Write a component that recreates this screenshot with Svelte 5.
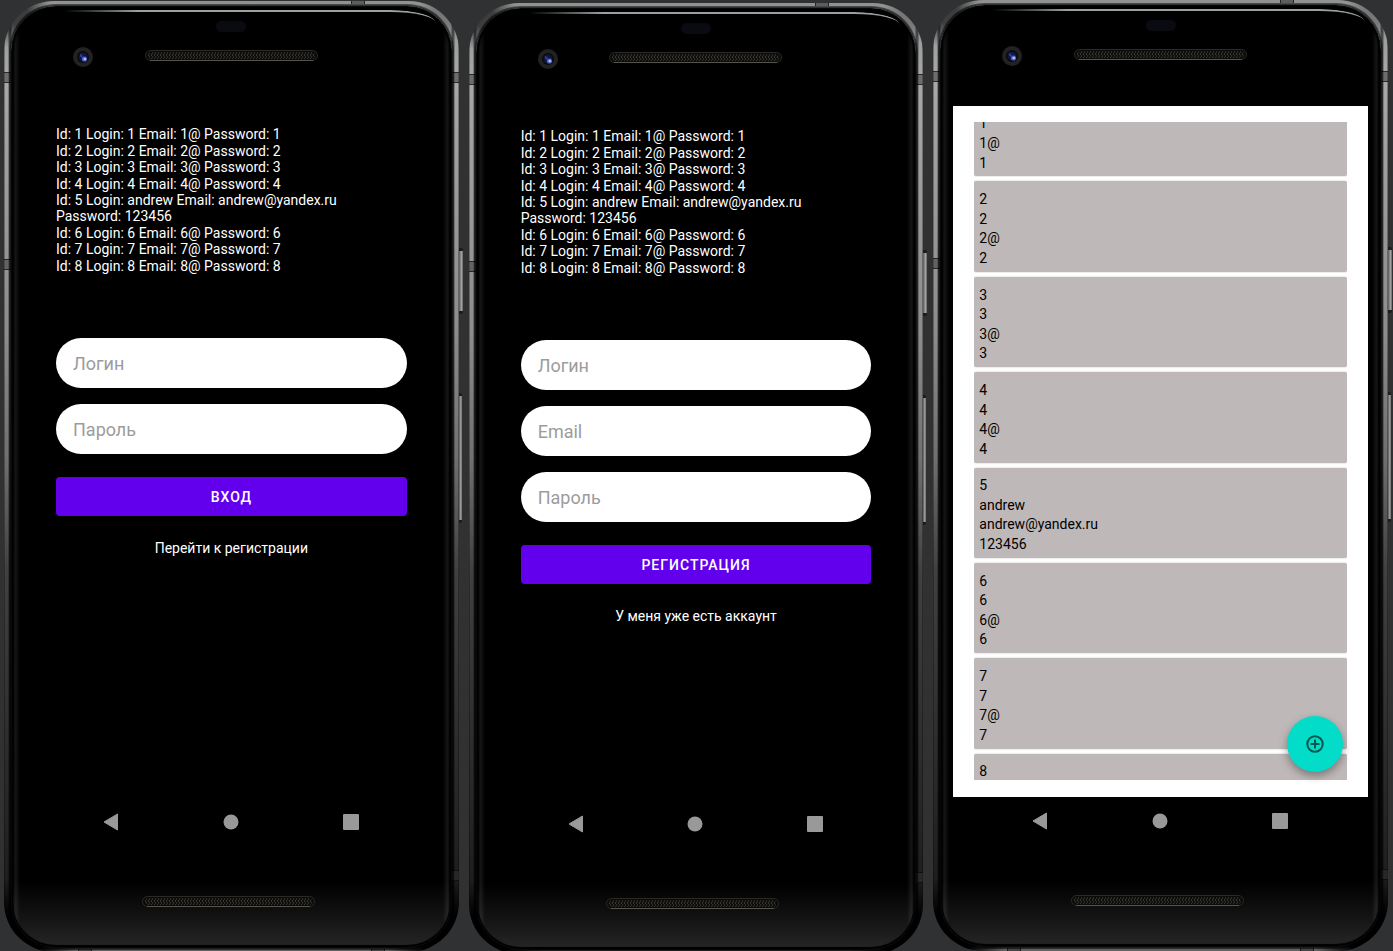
<script>
  import { onMount } from 'svelte';

  const users = [
    { id: 1, login: '1', email: '1@', password: '1' },
    { id: 2, login: '2', email: '2@', password: '2' },
    { id: 3, login: '3', email: '3@', password: '3' },
    { id: 4, login: '4', email: '4@', password: '4' },
    { id: 5, login: 'andrew', email: 'andrew@yandex.ru', password: '123456' },
    { id: 6, login: '6', email: '6@', password: '6' },
    { id: 7, login: '7', email: '7@', password: '7' },
    { id: 8, login: '8', email: '8@', password: '8' }
  ];

  let list;

  onMount(() => {
    list.scrollTop = 36;
  });
</script>

{#snippet speaker()}
  <svg class="speaker" width="173" height="11" viewBox="0 0 173 11" aria-hidden="true">
    <defs>
      <pattern id="mesh" width="3" height="4" patternUnits="userSpaceOnUse">
        <rect width="3" height="4" fill="#0f0f0d" />
        <rect width="1" height="2" fill="#3a3730" />
        <rect x="1" y="2" width="1" height="2" fill="#2f2d27" />
      </pattern>
    </defs>
    <rect x="0.5" y="0.5" width="172" height="10" rx="5" fill="#0b0b0a" stroke="#2b2a27" />
    <rect x="3" y="2" width="167" height="7" rx="3.5" fill="url(#mesh)" />
    <path d="M5 10.5H168" stroke="#55544e" />
  </svg>
{/snippet}

{#snippet log()}
  <div class="log">
    {#each users as u}
      <div>Id: {u.id} Login: {u.login} Email: {u.email} Password: {u.password}</div>
    {/each}
  </div>
{/snippet}

{#snippet phone(content)}
  <section class="phone">
    <span class="key power"></span>
    <span class="key volume"></span>
    <span class="seam left upper"></span>
    <span class="seam left middle"></span>
    <span class="seam right upper"></span>
    <span class="seam right lower"></span>
    <span class="notch top-right"></span>
    <span class="notch bottom-left"></span>
    <span class="notch bottom-right"></span>
    <div class="glass">
      <span class="shine"></span>
      <div class="head">
        <svg class="camera" width="20" height="20" viewBox="0 0 20 20" aria-hidden="true">
          <circle cx="10" cy="10" r="10" fill="#232222" />
          <circle cx="10" cy="10" r="6" fill="#090a10" />
          <circle cx="10" cy="10" r="4.5" fill="#10163c" />
          <path d="M7 6.5l3 2.5-1 2-2-1.5z" fill="#2b3c92" />
          <circle cx="11.5" cy="12" r="2.6" fill="#4c62c8" />
          <circle cx="11.8" cy="12" r="1.3" fill="#b5c3ff" />
        </svg>
        <div class="middle-top">
          <span class="sensor"></span>
          {@render speaker()}
        </div>
      </div>
      <div class="screen">{@render content()}</div>
      <div class="nav">
        <button aria-label="Back">
          <svg width="16" height="18" viewBox="0 0 16 18"><path d="M14.5 1v16L1 9z" fill="#999" stroke="#999" stroke-linejoin="round" /></svg>
        </button>
        <button aria-label="Home">
          <svg width="16" height="16" viewBox="0 0 16 16"><circle cx="8" cy="8" r="7.5" fill="#999" /></svg>
        </button>
        <button aria-label="Recent apps">
          <svg width="16" height="16" viewBox="0 0 16 16"><rect width="16" height="16" rx="1" fill="#999" /></svg>
        </button>
      </div>
      <div class="foot">{@render speaker()}</div>
    </div>
  </section>
{/snippet}

{#snippet login()}
  <form class="auth">
    {@render log()}
    <input type="text" placeholder="Логин" aria-label="Логин" />
    <input type="password" placeholder="Пароль" aria-label="Пароль" />
    <button type="button" class="submit">ВХОД</button>
    <a href="#register">Перейти к регистрации</a>
  </form>
{/snippet}

{#snippet register()}
  <form class="auth">
    {@render log()}
    <input type="text" placeholder="Логин" aria-label="Логин" />
    <input type="email" placeholder="Email" aria-label="Email" />
    <input type="password" placeholder="Пароль" aria-label="Пароль" />
    <button type="button" class="submit">РЕГИСТРАЦИЯ</button>
    <a href="#login">У меня уже есть аккаунт</a>
  </form>
{/snippet}

{#snippet records()}
  <div class="records">
    <div class="viewport" bind:this={list}>
      <ul>
        {#each users as u}
          <li>
            <span>{u.id}</span>
            <span>{u.login}</span>
            <span>{u.email}</span>
            <span>{u.password}</span>
          </li>
        {/each}
      </ul>
    </div>
    <button class="fab" aria-label="Add">
      <svg width="18" height="18" viewBox="0 0 18 18" fill="none" stroke="#03584f" stroke-width="2">
        <circle cx="9" cy="9" r="7.7" />
        <path d="M9 4.5v9M4.5 9h9" />
      </svg>
    </button>
  </div>
{/snippet}

<main>
  {@render phone(login)}
  {@render phone(register)}
  {@render phone(records)}
</main>

<style>
  :global(body) {
    margin: 0;
    background: #2f3133;
  }

  main {
    display: grid;
    grid-template-columns: repeat(3, 1fr);
    gap: 10px;
    box-sizing: border-box;
    min-height: 100vh;
    max-height: 951px;
    padding: 0 5px 0 4px;
    overflow: hidden;
    background: #2f3133;
    font: 14px/16px Roboto, sans-serif;
    color: #fff;
  }

  .phone {
    position: relative;
    box-sizing: border-box;
    height: 951px;
    padding: 5px 7px 4px;
    border-radius: 50px;
    background:
      radial-gradient(circle at 14px 14px, rgba(0, 0, 0, 0.6) 10px, transparent 34px),
      radial-gradient(circle at calc(100% - 14px) 14px, rgba(0, 0, 0, 0.2) 10px, transparent 28px),
      radial-gradient(circle at 14px calc(100% - 14px), #000 24px, transparent 60px),
      radial-gradient(circle at calc(100% - 14px) calc(100% - 14px), #000 24px, transparent 60px),
      linear-gradient(90deg, rgba(0, 0, 0, 0.3) 0 1px, transparent 1px 4px, rgba(0, 0, 0, 0.5) 5px 7px, transparent 8px calc(100% - 8px), rgba(0, 0, 0, 0.5) calc(100% - 7px) calc(100% - 5px), transparent calc(100% - 4px) calc(100% - 1px), rgba(0, 0, 0, 0.3) calc(100% - 1px)),
      linear-gradient(#909292, #a8a8a8 8%, #8c8c8c 35%, #707070 48%, #404040 60%, #262626 85%, #181818 98%, #666 100%);
  }

  .phone:nth-child(1) {
    top: 1px;
  }

  .phone:nth-child(2) {
    top: 3px;
  }

  .key {
    position: absolute;
    left: 100%;
    box-sizing: border-box;
    border: solid #1c1c1c;
    border-width: 3px 0;
    border-radius: 0 2px 2px 0;
    background: linear-gradient(90deg, #555, #a3a3a3 60%, #666);
  }

  .power {
    top: 247px;
    width: 4px;
    height: 66px;
  }

  .volume {
    top: 392px;
    width: 3px;
    height: 130px;
  }

  .seam {
    position: absolute;
    box-sizing: border-box;
    width: 7px;
    height: 11px;
    border: solid rgba(0, 0, 0, 0.6);
    border-width: 1px 0;
    background: rgba(50, 50, 50, 0.5);
  }

  .left {
    left: 0;
  }

  .right {
    right: 0;
  }

  .upper {
    top: 71px;
  }

  .middle {
    top: 258px;
  }

  .lower {
    top: 869px;
  }

  .notch {
    position: absolute;
    box-sizing: border-box;
    width: 14px;
    height: 3px;
    border: solid rgba(0, 0, 0, 0.6);
    border-width: 0 1px;
    background: rgba(40, 40, 40, 0.5);
  }

  .top-right {
    top: 0;
    right: 94px;
  }

  .bottom-left {
    bottom: 0;
    left: 74px;
  }

  .bottom-right {
    bottom: 0;
    right: 74px;
  }

  .glass {
    position: relative;
    display: flex;
    flex-direction: column;
    box-sizing: border-box;
    height: 100%;
    padding: 0 12px;
    border: 1px solid #080808;
    border-radius: 45px;
    background:
      linear-gradient(90deg, transparent 1px, rgba(255, 255, 255, 0.08) 3px 4px, transparent 8px calc(100% - 8px), rgba(255, 255, 255, 0.08) calc(100% - 4px) calc(100% - 3px), transparent calc(100% - 1px)),
      linear-gradient(#000 93%, #0f0f0f 96%, #262626 100%);
    box-shadow:
      0 0 0 1px rgba(0, 0, 0, 0.35),
      0 0 0 2px rgba(0, 0, 0, 0.5),
      inset 0 0 0 1px #000,
      inset 0 4px 3px #000,
      inset 0 -2px 1px #000;
  }

  .shine {
    position: absolute;
    top: 3px;
    left: 52px;
    right: 15px;
    box-sizing: border-box;
    height: 13px;
    border-top: 2px solid #98a2a3;
    border-radius: 0 46px 0 0 / 0 13px 0 0;
    -webkit-mask: linear-gradient(90deg, transparent, #000 20%);
    mask: linear-gradient(90deg, transparent, #000 20%);
  }

  .head {
    display: grid;
    grid-template-columns: 1fr auto 1fr;
    height: 100px;
    flex: none;
  }

  .camera {
    margin: 40px 0 0 49px;
  }

  .middle-top {
    display: flex;
    flex-direction: column;
    align-items: center;
    gap: 18px;
    padding-top: 14px;
  }

  .sensor {
    width: 30px;
    height: 11px;
    border-radius: 6px;
    background: #0a0b10;
  }

  .screen {
    height: 691px;
    flex: none;
  }

  .nav {
    display: grid;
    grid-template-columns: repeat(3, 1fr);
    height: 48px;
    flex: none;
    padding: 0 28px 0 27px;
  }

  .nav button {
    display: flex;
    align-items: center;
    justify-content: center;
    padding: 0;
    border: 0;
    background: none;
  }

  .foot {
    display: flex;
    justify-content: center;
    padding: 50px 6px 0 0;
  }

  .auth {
    display: flex;
    flex-direction: column;
    padding: 19px 32px 0;
  }

  .log {
    display: flex;
    flex-direction: column;
    justify-content: space-between;
    height: 148px;
    margin-bottom: 64px;
    padding-right: 16px;
  }

  .auth input {
    box-sizing: border-box;
    width: 100%;
    height: 50px;
    margin-bottom: 16px;
    padding: 1px 17px 0;
    border: 0;
    border-radius: 25px;
    outline: 0;
    background: #fff;
    color: #222;
    font: 18px/24px Roboto, sans-serif;
  }

  .auth input::placeholder {
    color: #9c9c9c;
    opacity: 1;
  }

  .submit {
    height: 39px;
    margin: 7px 0 24px;
    padding: 0;
    border: 0;
    border-radius: 4px;
    background: #6200ee;
    color: #fff;
    font: 500 14px/16px Roboto, sans-serif;
    letter-spacing: 1px;
  }

  .auth a {
    align-self: center;
    color: #fff;
    text-decoration: none;
  }

  .records {
    position: relative;
    box-sizing: border-box;
    height: 100%;
    padding: 16px 21px 17px;
    background: #fff;
    color: #000;
  }

  .viewport {
    height: 100%;
    overflow-y: auto;
    scrollbar-width: none;
  }

  ul {
    display: grid;
    grid-template-rows: repeat(8, 1fr);
    gap: 5px;
    height: 758px;
    margin: 0;
    padding: 0;
    list-style: none;
  }

  li {
    display: grid;
    grid-template-rows: repeat(4, 1fr);
    align-items: center;
    padding: 8px 5px 4px;
    border-radius: 2px;
    background: #beb8b8;
    box-shadow: 0 0 2px rgba(0, 0, 0, 0.25);
  }

  .fab {
    position: absolute;
    right: 25px;
    bottom: 25px;
    display: flex;
    align-items: center;
    justify-content: center;
    width: 56px;
    height: 56px;
    padding: 0;
    border: 0;
    border-radius: 50%;
    background: #03dcc8;
    box-shadow: 0 4px 8px rgba(0, 0, 0, 0.35);
  }
</style>
